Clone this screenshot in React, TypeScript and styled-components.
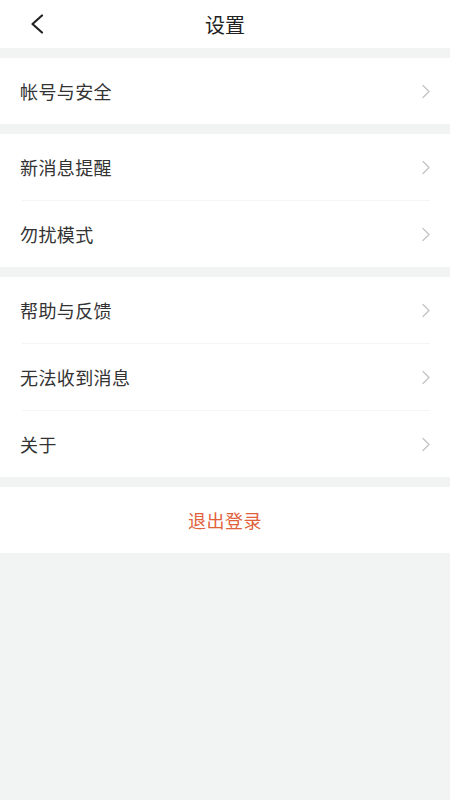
import React from "react";
import styled, { createGlobalStyle } from "styled-components";

const Global = createGlobalStyle`
  html, body { margin: 0; padding: 0; background: #f2f3f3; }
  body { font-family: "Noto Sans CJK SC", "Noto Sans", sans-serif; }
`;

const Page = styled.div`
  width: 450px;
  min-height: 800px;
  background: #f2f3f3;
  display: flex;
  flex-direction: column;
  gap: 10px;
`;

const Header = styled.header`
  height: 48px;
  background: #fff;
  display: grid;
  grid-template-columns: 80px 1fr 80px;
  align-items: center;
`;

const BackButton = styled.button`
  border: 0;
  background: none;
  padding: 0 0 0 29px;
  height: 48px;
  display: flex;
  align-items: center;
  cursor: pointer;
`;

const Title = styled.h1`
  margin: 0;
  text-align: center;
  font-size: 20px;
  font-weight: 400;
  color: #222;
`;

const Group = styled.section`
  background: #fff;
  display: flex;
  flex-direction: column;
`;

const Row = styled.div<{ $divider?: boolean }>`
  height: 66px;
  display: flex;
  align-items: center;
  justify-content: space-between;
  padding: 0 17px 0 20px;
  position: relative;
  ${(p) =>
    p.$divider &&
    `
    height: 67px;
    box-sizing: border-box;
    border-bottom: 1px solid transparent;
    &::after {
      content: "";
      position: absolute;
      left: 22px;
      right: 20px;
      bottom: -1px;
      height: 1px;
      background: #f5f5f5;
    }
  `}
`;

const Label = styled.span`
  font-size: 18px;
  color: #333;
  letter-spacing: 0.4px;
`;

const Logout = styled.button`
  height: 66px;
  border: 0;
  background: #fff;
  width: 100%;
  font-family: inherit;
  font-size: 18px;
  color: #e2613d;
  letter-spacing: 0.5px;
  cursor: pointer;
`;

const Chevron = () => (
  <svg width="12" height="15" viewBox="0 0 12 15" fill="none">
    <path d="M2 1.5 L8 7.5 L2 13.5" stroke="#c4c4c4" strokeWidth="1.3" strokeLinecap="round" strokeLinejoin="round" />
  </svg>
);

const BackIcon = () => (
  <svg width="16" height="20" viewBox="0 0 16 20" fill="none">
    <path d="M13 1.5 L3.5 10 L13 18.5" stroke="#222" strokeWidth="2.2" strokeLinecap="round" strokeLinejoin="round" />
  </svg>
);

const groups: string[][] = [
  ["帐号与安全"],
  ["新消息提醒", "勿扰模式"],
  ["帮助与反馈", "无法收到消息", "关于"],
];

export default function App() {
  return (
    <>
      <Global />
      <Page>
        <Header>
          <BackButton aria-label="返回">
            <BackIcon />
          </BackButton>
          <Title>设置</Title>
          <span />
        </Header>
        {groups.map((g, gi) => (
          <Group key={gi}>
            {g.map((label, i) => (
              <Row key={label} $divider={i < g.length - 1}>
                <Label>{label}</Label>
                <Chevron />
              </Row>
            ))}
          </Group>
        ))}
        <Group>
          <Logout>退出登录</Logout>
        </Group>
      </Page>
    </>
  );
}
